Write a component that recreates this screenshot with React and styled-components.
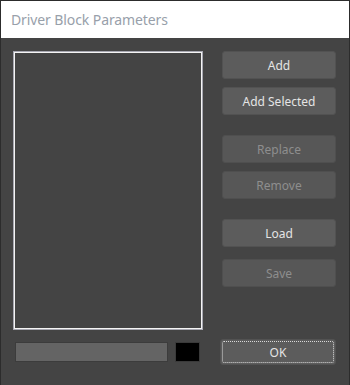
import React from "react";
import styled, { createGlobalStyle } from "styled-components";

const Global = createGlobalStyle`
  html, body { margin: 0; padding: 0; background: #444444; }
  body { font-family: "Noto Sans", "Open Sans", sans-serif; }
  * { box-sizing: border-box; }
`;

const Window = styled.div`
  width: 350px;
  height: 385px;
  border: 1px solid #2c2c2c;
  border-bottom: none;
  display: flex;
  flex-direction: column;
  background: #444444;
`;

const TitleBar = styled.div`
  height: 37px;
  background: #ffffff;
  display: flex;
  align-items: center;
  padding-left: 10px;
  font-size: 14px;
  letter-spacing: -0.1px;
  color: #98a0aa;
`;

const Body = styled.div`
  flex: 1;
  display: flex;
  flex-direction: column;
  padding: 13px 0 0 12px;
`;

const TopRow = styled.div`
  display: flex;
  align-items: flex-start;
`;

const ListBox = styled.div`
  width: 190px;
  height: 279px;
  border: 1px solid #a8a8b2;
  box-shadow: inset 0 0 0 1px #f4f4f4;
  background: #444444;
`;

const ButtonColumn = styled.div`
  display: flex;
  flex-direction: column;
  margin-left: 19px;
`;

const Button = styled.button`
  width: ${(p) => p.$w || 114}px;
  height: ${(p) => p.$h || 28}px;
  margin-top: ${(p) => p.$mt || 0}px;
  margin-left: ${(p) => p.$ml || 0}px;
  position: relative;
  background: ${(p) => (p.disabled ? "#575757" : "#5c5c5c")};
  border: 1px solid ${(p) => (p.disabled ? "#4f4f4f" : "#525252")};
  border-radius: 3px;
  font-family: "Noto Sans", "Open Sans", sans-serif;
  font-size: 12px;
  color: ${(p) => (p.disabled ? "#8e8e8e" : "#e4e4e4")};
  padding: 0;
  display: flex;
  align-items: center;
  justify-content: center;
  cursor: default;
  ${(p) =>
    p.$focus &&
    `
    &::after {
      content: "";
      position: absolute;
      inset: 1px;
      border: 1px dotted #d8d8d8;
      border-radius: 2px;
    }
  `}
`;

const BottomRow = styled.div`
  display: flex;
  align-items: center;
  margin-top: 9px;
`;

const Progress = styled.div`
  width: 153px;
  height: 20px;
  margin-left: 2px;
  background: #646464;
  border: 1px solid #3c3c3c;
`;

const Swatch = styled.div`
  width: 25px;
  height: 20px;
  margin-left: 7px;
  background: #000000;
  border: 1px solid #3a3a3a;
`;

export default function App() {
  return (
    <>
      <Global />
      <Window>
        <TitleBar>Driver Block Parameters</TitleBar>
        <Body>
          <TopRow>
            <ListBox />
            <ButtonColumn>
              <Button>Add</Button>
              <Button $mt={8}>Add Selected</Button>
              <Button $mt={20} disabled>Replace</Button>
              <Button $mt={8} disabled>Remove</Button>
              <Button $mt={20}>Load</Button>
              <Button $mt={12} disabled>Save</Button>
            </ButtonColumn>
          </TopRow>
          <BottomRow>
            <Progress />
            <Swatch />
            <Button $w={116} $h={26} $ml={20} $focus>OK</Button>
          </BottomRow>
        </Body>
      </Window>
    </>
  );
}
